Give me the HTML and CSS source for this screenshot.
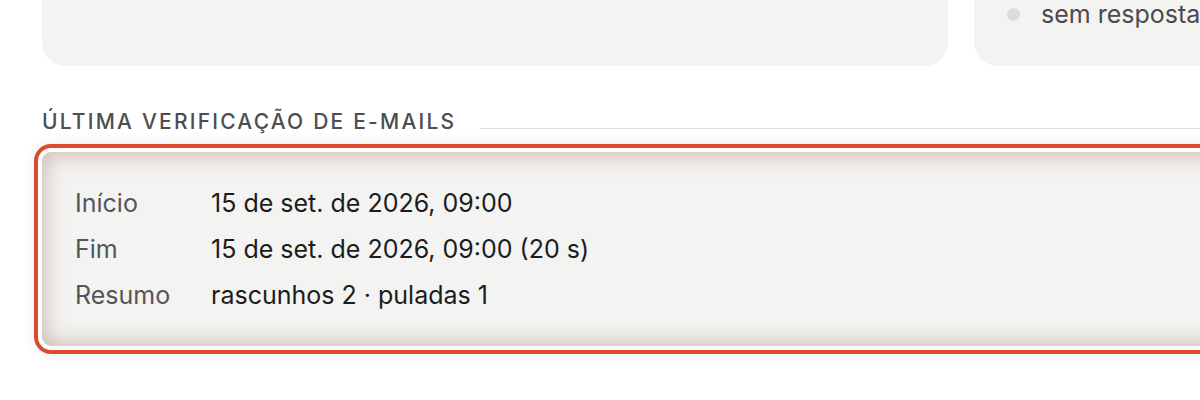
FILE: index.html
```html
<!DOCTYPE html>
<html lang="pt-BR">
<head>
<meta charset="utf-8">
<title>Última verificação</title>
<link rel="stylesheet" href="styles.css">
</head>
<body>
<div class="page">
  <div class="top-row">
    <div class="card card-main"></div>
    <div class="card card-side">
      <ul class="legend">
        <li><span class="dot"></span>sem resposta</li>
      </ul>
    </div>
  </div>
  <section class="check">
    <div class="section-head">
      <h2 class="section-title">Última verificação de e-mails</h2>
      <span class="rule"></span>
    </div>
    <div class="check-card">
      <dl class="facts">
        <dt>Início</dt><dd>15 de set. de 2026, 09:00</dd>
        <dt>Fim</dt><dd>15 de set. de 2026, 09:00 (20 s)</dd>
        <dt>Resumo</dt><dd>rascunhos 2 · puladas 1</dd>
      </dl>
    </div>
  </section>
</div>
</body>
</html>
```
FILE: styles.css
```css
html {
  overflow: hidden;
}
html, body {
  margin: 0;
  padding: 0;
  background: #ffffff;
}
body {
  font-family: Inter, "Noto Sans", "Liberation Sans", sans-serif;
  color: #1c1c1c;
}
.page {
  padding: 0 0 54px 42px;
  width: 1300px;
}
.top-row {
  display: flex;
  gap: 26px;
  height: 66px;
}
.card {
  background: #f3f3f1;
  border-radius: 0 0 24px 24px;
}
.card-main {
  width: 906px;
}
.card-side {
  flex: 1;
  padding-left: 33px;
}
.legend {
  list-style: none;
  margin: 0;
  padding: 0;
}
.legend li {
  display: flex;
  align-items: center;
  font-size: 25px;
  line-height: 28px;
  color: #4a4a4f;
}
.dot {
  width: 13px;
  height: 13px;
  border-radius: 50%;
  background: #dcdcdc;
  margin-right: 21px;
}
.check {
  padding-top: 43px;
}
.section-head {
  display: flex;
  align-items: flex-start;
  gap: 24px;
  height: 26px;
}
.section-title {
  margin: 0;
  font-size: 21px;
  font-weight: 500;
  letter-spacing: 0.105em;
  text-transform: uppercase;
  color: #4d4d52;
  line-height: 26px;
  white-space: nowrap;
}
.rule {
  flex: 1;
  height: 0;
  border-bottom: 1px solid #dddddd;
  margin-top: 19px;
}
.check-card {
  margin-top: 17px;
  height: 194px;
  box-sizing: border-box;
  background: #f3f3f1;
  border-radius: 9px;
  padding: 28px 33px;
  box-shadow:
    inset 0 0 20px 4px rgba(140, 90, 80, 0.34),
    0 0 0 4px #ffffff,
    0 0 0 8px #dd4a2f,
    0 0 14px 8px rgba(0, 0, 0, 0.08);
}
.facts {
  display: grid;
  grid-template-columns: 136px auto;
  margin: 0;
  font-size: 25px;
  line-height: 46px;
}
.facts dt {
  color: #55555a;
}
.facts dd {
  margin: 0;
  color: #1c1c1c;
}
```
